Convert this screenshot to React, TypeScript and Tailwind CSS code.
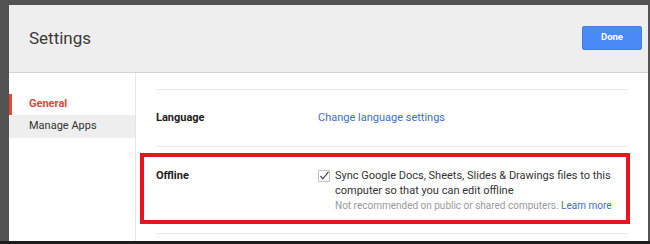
import React from 'react';

const App: React.FC = () => {
  return (
    <div className="w-[650px] h-[244px] overflow-hidden bg-[#525252] pl-[9px] pt-[5px] pr-[2px] border-b-[3px] border-[#1c1c1c] font-['Roboto',_'Liberation_Sans',_sans-serif]">
      <div className="bg-white h-full flex flex-col">
        <div className="h-[68px] shrink-0 bg-[#eeeeee] border-b border-[#d4d4d4] flex items-center justify-between pl-5 pr-[6px]">
          <h1 className="text-[17px] text-[#3a3a3a] leading-none">Settings</h1>
          <button className="w-[60px] h-[24px] bg-[#4a8af4] border border-[#3f7fe8] rounded-[2px] text-white text-[9.5px] font-bold -mt-[2px]">
            Done
          </button>
        </div>

        <div className="flex flex-1">
          <div className="w-[127px] shrink-0 border-r border-[#e6e6e6] pt-[21px]">
            <div className="h-[21px] flex items-center border-l-[3px] border-[#dd4b39] pl-[17px] text-[11px] font-bold text-[#dd4b39]">
              General
            </div>
            <div className="h-[23px] flex items-center bg-[#eeeeee] pl-5 text-[11px] text-[#333333]">
              Manage Apps
            </div>
          </div>

          <div className="flex-1 pl-5 pr-5 pt-[16px]">
            <div className="border-t border-[#ebebeb] h-[57px] flex items-center text-[11px]">
              <div className="w-[162px] shrink-0 font-bold text-[#222222]">Language</div>
              <a className="text-[#3b6fd3]">Change language settings</a>
            </div>
            <div className="border-t border-[#ebebeb] pt-[6px] pb-[9px]">
              <div className="-ml-[16px] -mr-[2px] border-4 border-[#e8141f] h-[71px] pl-3 pt-[11px] flex text-[11px]">
                <div className="w-[162px] shrink-0 font-bold text-[#222222] leading-[15px]">Offline</div>
                <div className="flex">
                  <svg width="12" height="12" viewBox="0 0 12 12" className="mt-[2px] mr-[5px] shrink-0">
                    <rect x="0.5" y="0.5" width="11" height="11" fill="white" stroke="#c4c4c4" />
                    <path d="M2.5 6 L4.8 8.8 L10.5 1.8" fill="none" stroke="#444444" strokeWidth="1.2" />
                  </svg>
                  <div>
                    <div className="text-[#333333] leading-[15px] w-[280px]">
                      Sync Google Docs, Sheets, Slides &amp; Drawings files to this computer so that you can edit offline
                    </div>
                    <div className="text-[10px] text-[#9a9a9a] leading-[15px]">
                      Not recommended on public or shared computers.{' '}
                      <a className="text-[#3b6fd3]">Learn more</a>
                    </div>
                  </div>
                </div>
              </div>
            </div>
            <div className="border-t border-[#ebebeb]" />
          </div>
        </div>
      </div>
    </div>
  );
};

export default App;
